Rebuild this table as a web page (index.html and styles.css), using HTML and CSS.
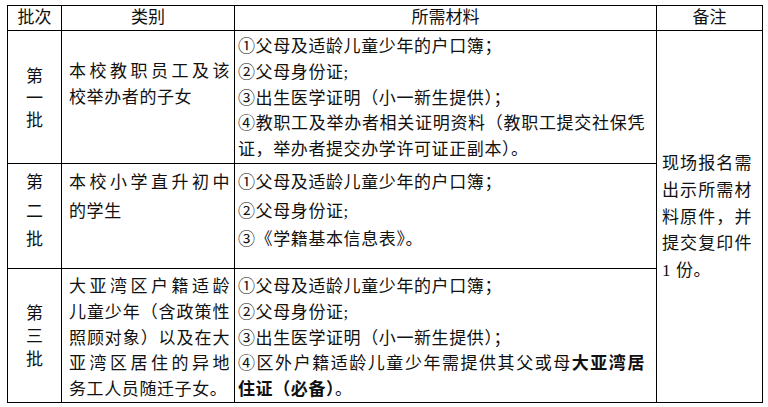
FILE: index.html
```html
<!DOCTYPE html>
<html lang="zh-CN">
<head>
<meta charset="utf-8">
<title>招生批次所需材料</title>
<link rel="stylesheet" href="styles.css">
</head>
<body>
<div class="sheet">
  <div class="cell head">批次</div>
  <div class="cell head">类别</div>
  <div class="cell head">所需材料</div>
  <div class="cell head">备注</div>

  <div class="cell batch b1"><span>第</span><span>一</span><span>批</span></div>
  <div class="cell cat r1">
    <span class="ln j">本校教职员工及该</span>
    <span class="ln">校举办者的子女</span>
  </div>
  <div class="cell mat r1">
    <span class="ln">①父母及适龄儿童少年的户口簿；</span>
    <span class="ln">②父母身份证;</span>
    <span class="ln">③出生医学证明（小一新生提供）；</span>
    <span class="ln j">④教职工及举办者相关证明资料（教职工提交社保凭</span>
    <span class="ln">证，举办者提交办学许可证正副本）。</span>
  </div>
  <div class="cell note">
    <span class="ln j">现场报名需</span>
    <span class="ln j">出示所需材</span>
    <span class="ln j">料原件，并</span>
    <span class="ln j">提交复印件</span>
    <span class="ln">1 份。</span>
  </div>

  <div class="cell batch b2"><span>第</span><span>二</span><span>批</span></div>
  <div class="cell cat r2">
    <span class="ln j">本校小学直升初中</span>
    <span class="ln">的学生</span>
  </div>
  <div class="cell mat r2">
    <span class="ln">①父母及适龄儿童少年的户口簿；</span>
    <span class="ln">②父母身份证;</span>
    <span class="ln">③《学籍基本信息表》。</span>
  </div>

  <div class="cell batch b3"><span>第</span><span>三</span><span>批</span></div>
  <div class="cell cat r3">
    <span class="ln j">大亚湾区户籍适龄</span>
    <span class="ln j">儿童少年（含政策性</span>
    <span class="ln j">照顾对象）以及在大</span>
    <span class="ln j">亚湾区居住的异地</span>
    <span class="ln">务工人员随迁子女。</span>
  </div>
  <div class="cell mat r3">
    <span class="ln">①父母及适龄儿童少年的户口簿；</span>
    <span class="ln">②父母身份证;</span>
    <span class="ln">③出生医学证明（小一新生提供）；</span>
    <span class="ln j">④区外户籍适龄儿童少年需提供其父或母<b>大亚湾居</b></span>
    <span class="ln"><b>住证（必备）</b>。</span>
  </div>
</div>
</body>
</html>
```

FILE: styles.css
```css
html, body {
  margin: 0;
  background: #fff;
}

.sheet {
  display: grid;
  grid-template-columns: 53px 172px 421px 105px;
  grid-template-rows: 24px 132px 104px 133px;
  gap: 1px;
  width: max-content;
  margin: 5px 0 0 7px;
  background: #000;
  border: 1px solid #000;
  font-family: "Liberation Serif", "Noto Sans CJK SC", sans-serif;
  font-size: 17px;
  color: #111;
}

.cell {
  background: #fff;
  box-sizing: border-box;
  min-width: 0;
}

.ln {
  display: block;
}

.j {
  text-align: justify;
  text-align-last: justify;
}

b {
  font-weight: 700;
}

.head {
  line-height: 24px;
  text-align: center;
}

.batch {
  display: flex;
  flex-direction: column;
  align-items: center;
}

.b1 {
  line-height: 22px;
  padding-top: 35px;
}

.b2 {
  line-height: 28.5px;
  padding-top: 5px;
}

.b3 {
  line-height: 23px;
  padding-top: 33px;
}

.cat {
  padding: 0 4px 0 7px;
  letter-spacing: 0.6px;
}

.mat {
  padding: 0 11px 0 3px;
  letter-spacing: 0.6px;
}

.r1 {
  line-height: 25.75px;
  padding-top: 3px;
}

.cat.r1 {
  padding-top: 28px;
}

.r2 {
  line-height: 28.5px;
  padding-top: 5px;
}

.r3 {
  line-height: 25.75px;
  padding-top: 5px;
}

.note {
  grid-column: 4;
  grid-row: 2 / 5;
  padding: 120px 10px 0 5px;
  line-height: 26.75px;
  letter-spacing: 0.6px;
}
```
